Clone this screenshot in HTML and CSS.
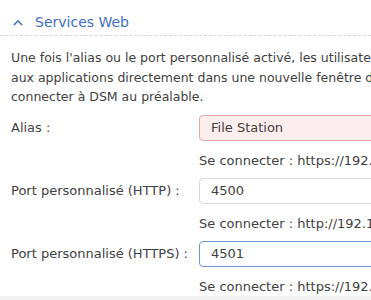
FILE: index.html
```html
<!DOCTYPE html>
<html lang="fr">
<head>
    <meta charset="UTF-8">
    <meta name="viewport" content="width=device-width, initial-scale=1.0">
    <title>Services Web</title>
    <link rel="stylesheet" href="styles.css">
</head>
<body>
    <div class="panel">
        <header class="section-header">
            <svg class="chevron" width="10" height="7" viewBox="0 0 10 7">
                <polyline points="1,6 5,1.8 9,6" fill="none" stroke="#3f6fc4" stroke-width="1.6"/>
            </svg>
            <h2 class="section-title">Services Web</h2>
        </header>

        <p class="intro">Une fois l'alias ou le port personnalisé activé, les utilisateurs peuvent accéder<br>aux applications directement dans une nouvelle fenêtre de navigateur sans avoir à se<br>connecter à DSM au préalable.</p>

        <div class="form">
            <label class="field-label">Alias :</label>
            <div class="field">
                <input class="input invalid" type="text" value="File Station">
                <div class="hint">Se connecter : https://192.168.1.20:5001/file</div>
            </div>

            <label class="field-label">Port personnalisé (HTTP) :</label>
            <div class="field">
                <input class="input" type="text" value="4500">
                <div class="hint">Se connecter : http://192.168.1.20:4500</div>
            </div>

            <label class="field-label">Port personnalisé (HTTPS) :</label>
            <div class="field">
                <input class="input focused" type="text" value="4501">
                <div class="hint">Se connecter : https://192.168.1.20:4501</div>
            </div>
        </div>
    </div>
    <div class="footer"></div>
</body>
</html>
```

FILE: styles.css
```css
:root {
    --text-color: #414141;
    --title-color: #3f6fc4;
    --border: #d4d9e0;
}

html, body {
    margin: 0;
    overflow: hidden;
}

body {
    font-family: "DejaVu Sans", Verdana, sans-serif;
    font-size: 13px;
    color: var(--text-color);
    width: 371px;
    height: 300px;
}

.panel {
    padding: 0 0 0 11px;
}

.section-header {
    display: flex;
    align-items: center;
    gap: 12px;
    height: 36px;
    margin-left: -11px;
    padding: 9px 0 0 13px;
    border-bottom: 1px dashed #d6d6d6;
    box-sizing: border-box;
}

.chevron {
    flex: none;
}

.section-title {
    margin: 0;
    font-size: 14px;
    font-weight: normal;
    color: var(--title-color);
    white-space: nowrap;
}

.intro {
    margin: 12px 0 0;
    font-size: 12.5px;
    line-height: 19.5px;
    white-space: nowrap;
}

.form {
    display: grid;
    grid-template-columns: 188px 1fr;
    margin-top: 8px;
}

.field-label {
    line-height: 26px;
    white-space: nowrap;
}

.field {
    min-width: 0;
}

.input {
    display: block;
    box-sizing: border-box;
    width: 240px;
    height: 26px;
    margin: 0;
    padding: 0 11px;
    font-family: inherit;
    font-size: 13px;
    color: var(--text-color);
    background: #fff;
    border: 1px solid var(--border);
    border-radius: 4px;
    outline: none;
}

.input.invalid {
    background: #fdeeee;
    border-color: #e3a5a5;
}

.input.focused {
    border-color: #6f95cf;
}

.hint {
    padding: 11px 0 8px;
    line-height: 18px;
    white-space: nowrap;
}

.field:last-child .hint {
    padding-bottom: 0;
}

.footer {
    height: 10px;
    background: #f2f2f2;
}
```
